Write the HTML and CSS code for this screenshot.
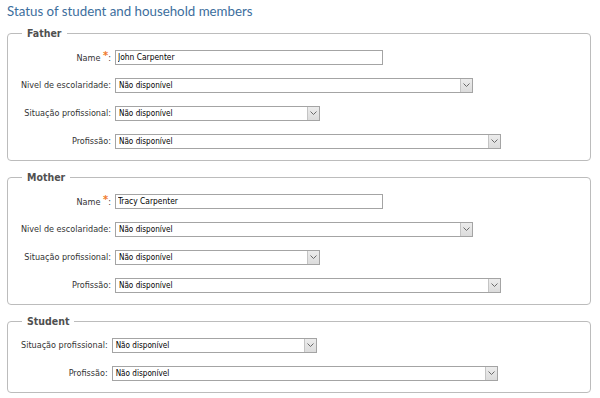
FILE: index.html
```html
<!DOCTYPE html>
<html lang="en">
<head>
<meta charset="utf-8">
<title>Status of student and household members</title>
<link rel="stylesheet" href="styles.css">
</head>
<body>
<h1 class="title">Status of student and household members</h1>

<fieldset class="group">
  <legend class="group-legend">Father</legend>
  <div class="form-grid">
    <label class="field-label">Name <span class="req">*</span>:</label>
    <div class="field"><input class="text-input w-name" type="text" value="John Carpenter"></div>

    <label class="field-label">Nivel de escolaridade:</label>
    <div class="field"><span class="select w-edu"><span class="select-value">Não disponível</span><span class="select-arrow"><svg viewBox="0 0 7 4" width="7" height="4"><path d="M0.5 0.5 L3.5 3.5 L6.5 0.5" fill="none" stroke="#6a6a6a" stroke-width="1"/></svg></span></span></div>

    <label class="field-label">Situação profissional:</label>
    <div class="field"><span class="select w-sit"><span class="select-value">Não disponível</span><span class="select-arrow"><svg viewBox="0 0 7 4" width="7" height="4"><path d="M0.5 0.5 L3.5 3.5 L6.5 0.5" fill="none" stroke="#6a6a6a" stroke-width="1"/></svg></span></span></div>

    <label class="field-label">Profissão:</label>
    <div class="field"><span class="select w-prof"><span class="select-value">Não disponível</span><span class="select-arrow"><svg viewBox="0 0 7 4" width="7" height="4"><path d="M0.5 0.5 L3.5 3.5 L6.5 0.5" fill="none" stroke="#6a6a6a" stroke-width="1"/></svg></span></span></div>
  </div>
</fieldset>

<fieldset class="group">
  <legend class="group-legend">Mother</legend>
  <div class="form-grid">
    <label class="field-label">Name <span class="req">*</span>:</label>
    <div class="field"><input class="text-input w-name" type="text" value="Tracy Carpenter"></div>

    <label class="field-label">Nivel de escolaridade:</label>
    <div class="field"><span class="select w-edu"><span class="select-value">Não disponível</span><span class="select-arrow"><svg viewBox="0 0 7 4" width="7" height="4"><path d="M0.5 0.5 L3.5 3.5 L6.5 0.5" fill="none" stroke="#6a6a6a" stroke-width="1"/></svg></span></span></div>

    <label class="field-label">Situação profissional:</label>
    <div class="field"><span class="select w-sit"><span class="select-value">Não disponível</span><span class="select-arrow"><svg viewBox="0 0 7 4" width="7" height="4"><path d="M0.5 0.5 L3.5 3.5 L6.5 0.5" fill="none" stroke="#6a6a6a" stroke-width="1"/></svg></span></span></div>

    <label class="field-label">Profissão:</label>
    <div class="field"><span class="select w-prof"><span class="select-value">Não disponível</span><span class="select-arrow"><svg viewBox="0 0 7 4" width="7" height="4"><path d="M0.5 0.5 L3.5 3.5 L6.5 0.5" fill="none" stroke="#6a6a6a" stroke-width="1"/></svg></span></span></div>
  </div>
</fieldset>

<fieldset class="group">
  <legend class="group-legend">Student</legend>
  <div class="form-grid">
    <label class="field-label">Situação profissional:</label>
    <div class="field"><span class="select w-sit"><span class="select-value">Não disponível</span><span class="select-arrow"><svg viewBox="0 0 7 4" width="7" height="4"><path d="M0.5 0.5 L3.5 3.5 L6.5 0.5" fill="none" stroke="#6a6a6a" stroke-width="1"/></svg></span></span></div>

    <label class="field-label">Profissão:</label>
    <div class="field"><span class="select w-prof"><span class="select-value">Não disponível</span><span class="select-arrow"><svg viewBox="0 0 7 4" width="7" height="4"><path d="M0.5 0.5 L3.5 3.5 L6.5 0.5" fill="none" stroke="#6a6a6a" stroke-width="1"/></svg></span></span></div>
  </div>
</fieldset>
</body>
</html>
```

FILE: styles.css
```css
html, body {
  background: #ffffff;
}

body {
  margin: 0;
  padding: 0 9px 0 7px;
  font-family: "DejaVu Sans Condensed", "DejaVu Sans", sans-serif;
  color: #333333;
}

.title {
  margin: 3px 0 0 0;
  font-family: "Lato", "Liberation Sans", sans-serif;
  font-size: 13.3px;
  line-height: 17px;
  font-weight: normal;
  color: #3c6e9d;
}

.group {
  margin: 7px 0 10px 0;
  padding: 3px 0 5px 13px;
  border: 1px solid #bcbcbc;
  border-radius: 4px;
  min-width: 0;
}

.group-legend {
  margin-left: 1px;
  padding: 0 5px;
  font-size: 10.5px;
  line-height: 13px;
  font-weight: bold;
  color: #505050;
}

.form-grid {
  display: grid;
  grid-template-columns: auto 1fr;
  grid-auto-rows: 28px;
  column-gap: 4px;
  align-items: center;
}

.field-label {
  text-align: right;
  white-space: nowrap;
  font-size: 9px;
  color: #333333;
}

.req {
  color: #f07a2a;
  font-weight: bold;
  font-size: 11px;
  position: relative;
  top: -2px;
}

.field {
  display: flex;
  align-items: center;
}

.text-input {
  box-sizing: border-box;
  height: 15px;
  margin: 0;
  padding: 0 2px;
  border: 1px solid #a4a4a4;
  border-radius: 0;
  background: #ffffff;
  font-family: "DejaVu Sans Condensed", "DejaVu Sans", sans-serif;
  font-size: 8.4px;
  color: #000000;
  outline: none;
}

.select {
  box-sizing: border-box;
  display: flex;
  align-items: stretch;
  height: 15px;
  border: 1px solid #a4a4a4;
  background: #ffffff;
}

.select-value {
  flex: 1;
  padding-left: 3px;
  font-size: 8.1px;
  line-height: 13px;
  color: #000000;
  white-space: nowrap;
  overflow: hidden;
}

.select-arrow {
  box-sizing: border-box;
  width: 12px;
  margin: 0;
  display: flex;
  align-items: center;
  justify-content: center;
  background: linear-gradient(#ececec, #dcdcdc);
  border-left: 1px solid #c4c4c4;
}

.select-arrow svg {
  display: block;
}

.w-name { width: 268px; }
.w-edu { width: 358px; }
.w-sit { width: 205px; }
.w-prof { width: 386px; }
```
